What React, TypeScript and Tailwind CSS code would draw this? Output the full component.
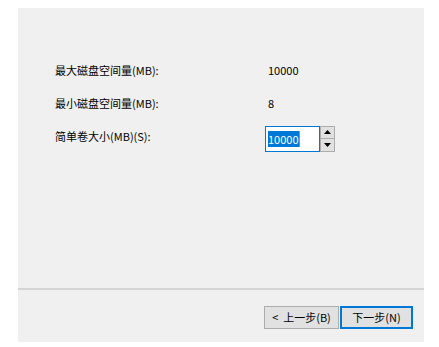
export default function App() {
  const font = { fontFamily: '"Noto Sans CJK SC", "Noto Sans", sans-serif' }

  return (
    <div className="w-[439px] h-[347px] bg-white pt-[8px] pl-[18px]" style={font}>
      <div className="w-[406px] h-[334px] bg-[#f0f0f0] flex flex-col text-[11px] text-black">
        {/* Fields */}
        <div className="h-[280px] pt-[46px] pl-[37px]">
          <div className="flex items-center h-[33px]">
            <span className="w-[213px]">最大磁盘空间量(MB):</span>
            <span>10000</span>
          </div>
          <div className="flex items-center h-[33px]">
            <span className="w-[213px]">最小磁盘空间量(MB):</span>
            <span>8</span>
          </div>
          <div className="flex items-center h-[33px]">
            <span className="w-[210px]">简单卷大小(MB)(S):</span>
            <div className="flex mt-[4px]">
              <div className="w-[55px] h-[26px] bg-white border border-[#0078d7] flex items-center pl-[2px]">
                <span className="bg-[#0078d7] text-white leading-[16px]">10000</span>
                <span className="w-px h-[16px] bg-[#d9822b]" />
              </div>
              <div className="flex flex-col w-[15px] h-[26px]">
                <button className="h-[13px] border border-[#adadad] bg-[#e1e1e1] flex items-center justify-center">
                  <svg width="7" height="4" viewBox="0 0 7 4">
                    <path d="M3.5 0 L7 4 L0 4 Z" fill="#000" />
                  </svg>
                </button>
                <button className="h-[13px] border border-t-0 border-[#adadad] bg-[#e1e1e1] flex items-center justify-center">
                  <svg width="7" height="4" viewBox="0 0 7 4">
                    <path d="M0 0 L7 0 L3.5 4 Z" fill="#000" />
                  </svg>
                </button>
              </div>
            </div>
          </div>
        </div>

        {/* Separator */}
        <div className="h-[2px] bg-[#d4d4d4]" />

        {/* Footer buttons */}
        <div className="flex justify-end pt-[16px] pr-[11px] gap-[1px]">
          <button className="w-[75px] h-[23px] border border-[#adadad] bg-[#e1e1e1] flex items-center justify-center whitespace-pre">
            {"<  上一步(B)"}
          </button>
          <button className="w-[73px] h-[23px] border-2 border-[#0078d7] bg-[#e1e1e1] flex items-center justify-center">
            下一步(N)
          </button>
        </div>
      </div>
    </div>
  )
}
